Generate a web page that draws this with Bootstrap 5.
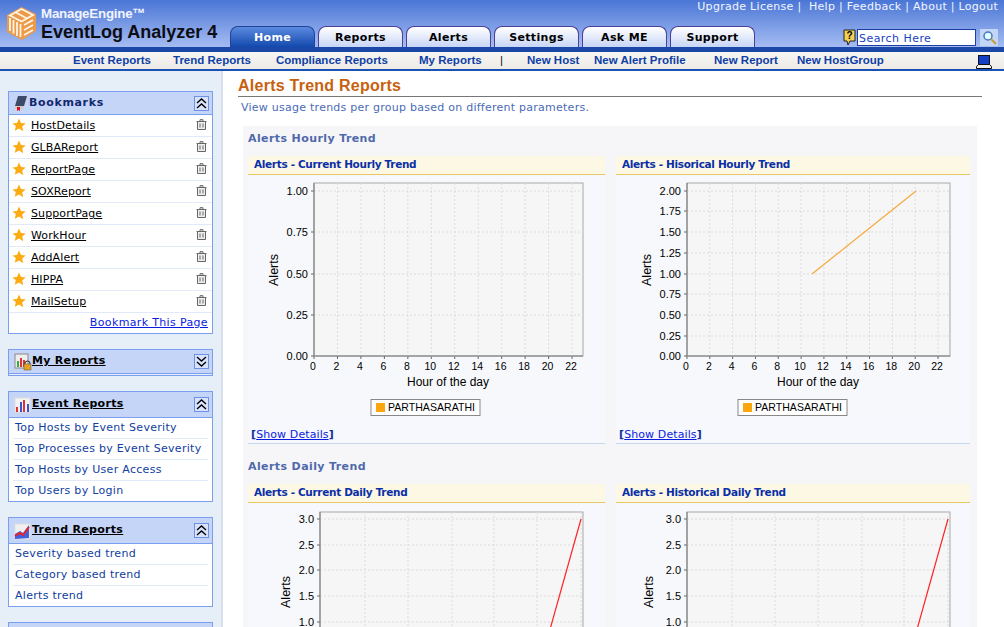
<!DOCTYPE html>
<html lang="en"><head><meta charset="utf-8"><title>EventLog Analyzer</title>
<link href="https://cdn.jsdelivr.net/npm/bootstrap@5.3.0/dist/css/bootstrap.min.css" rel="stylesheet">
<style>
html,body{height:627px;overflow:hidden;background:#fff}
body{font-family:"DejaVu Sans",Verdana,sans-serif;font-size:11px;color:#000}
.hdr{height:47px;background:linear-gradient(#4a76d6,#a5bcf2)}
.hdr-left{width:230px;flex:none;padding:6px 0 0 7px}
.brand-box{margin-left:5px;margin-top:-1px}
.brand1{font:bold 13.3px/17px "Liberation Sans",sans-serif;color:#f1f4ff;letter-spacing:-.2px}
.brand2{font:bold 18px/20px "Liberation Sans",sans-serif;color:#0d0d14;white-space:nowrap}
.hdr-right{flex:1;min-width:0}
.toplinks{color:#f2f5ff;letter-spacing:.29px;line-height:14px;white-space:pre;padding-right:6px;height:29px;margin-left:-70px}
.tabbar{gap:3px}
.tabx{width:85px;height:21px;border:1px solid #4b3f97;border-bottom:0;border-radius:8px 8px 0 0;background:linear-gradient(#fff,#c8d5f7);font-weight:bold;letter-spacing:.35px;text-align:center;line-height:22px;color:#000}
.tabx.on{background:linear-gradient(#5c8ae0,#1349ad);color:#fff;border-color:#24429a}
.srch{margin-left:88px;gap:1px}
.srch-in{width:119px;height:17px;margin-right:3px;background:#fff;border:1px solid #1a3fa0;color:#1a3fc0;letter-spacing:.45px;line-height:17px;padding-left:1px}
.hdr-bottom{height:5px;background:#1b47a6}
.subnav{height:19px;background:linear-gradient(#f7f6f3,#ecebe7);border-bottom:2px solid #1b51b5;padding-left:73px;font:bold 11.5px/17px "Liberation Sans",sans-serif;color:#0e3fa6}
.subnav>span{white-space:nowrap;flex:none}
.subnav>span:nth-child(1){width:100px}.subnav>span:nth-child(2){width:103px}.subnav>span:nth-child(3){width:143px}.subnav>span:nth-child(4){width:81px}
.subnav>span:nth-child(5){width:27px;color:#111;font-weight:normal}.subnav>span:nth-child(6){width:67px}.subnav>span:nth-child(7){width:120px}.subnav>span:nth-child(8){width:83px}.subnav>span:nth-child(9){width:179px}
.subnav svg{display:block;margin-top:3px}
.lay{height:557px;overflow:hidden}
.sidebar{width:223px;flex:none;background:#e6eef8;border-right:2px solid #d6dfeb;padding:20px 8px 0 8px}
.pan{border:1px solid #7b9ff0;background:#fff;margin-bottom:15px}
.pan-h{height:26px;background:#c5d5f8;border-bottom:1px solid #7b9ff0;padding:0 0 0 5px;font-weight:bold;letter-spacing:.3px;color:#000}
.pan-h.bmh{height:23px}
.pan-h.myh{height:24px}
.pan-tail{height:1px;background:#e8eefb}
.pan-h .ttl{flex:1;text-decoration:underline}
.pan-h .ttl.nolink{text-decoration:none;color:#14286e;letter-spacing:.65px;margin-left:1px}
.tog{width:15px;height:15px;margin-right:3px;border:1px solid #6d91e5;background:#d8e3fb}
.bk{height:22px;border-bottom:1px solid #e2e9f8;padding:0 0 2px 3px;letter-spacing:.1px}
.bk a{color:#000;margin-left:5px;flex:1;padding-top:4px;text-decoration:underline}
.bk svg.tr{margin-right:5px}
.bk-foot{height:20px;padding-right:4px;line-height:20px;letter-spacing:.35px}
.bk-foot a{color:#0a1ce0}
.lnk{height:21px;margin:0 4px;padding-left:2px;border-bottom:1px solid #e2e9f8;color:#10409e;letter-spacing:.3px;line-height:20px;white-space:nowrap}
.lnk:last-child{border-bottom:0;height:20px}
.mainp{flex:1;padding:5px 22px 0 15px;min-width:0}
.pg-t{font:bold 16px/20px "Liberation Sans",sans-serif;letter-spacing:.25px;color:#c8610d;border-bottom:1px solid #777;height:21px}
.pg-s{color:#4a6bb6;letter-spacing:.25px;margin:3px 0 0 3px;line-height:15px}
.sect{background:#f6f6f8;margin:11px 5px 0 5px;padding:0 5px;height:600px}
.sec-t{font-weight:bold;color:#5069ac;letter-spacing:.4px;height:30px;line-height:25px}
.sec2{padding-top:10px;height:40px}
.cols{gap:11px}
.colx{width:357px;flex:none;background:#f6f8fd}
.colx.nar{width:354px}
.colx .ch{height:19px;background:#fdf8e3;border-bottom:1px solid #e8c766;font:bold 10.5px/17px "DejaVu Sans",sans-serif;letter-spacing:-.33px;color:#0a2fa8;padding-left:6px}
.colx svg{display:block}
.sd{height:28px;border-bottom:1px solid #c6d7f0;padding:8px 0 0 3px;line-height:21px;letter-spacing:.1px;font-weight:bold;color:#10309c}
.sd a{font-weight:normal;color:#0a1ce0}
svg text{font-family:"Liberation Sans",sans-serif;fill:#000}
</style></head><body>
<div class="hdr d-flex">
<div class="hdr-left d-flex align-items-start">
<svg width="29" height="34" viewBox="0 0 29 34"><path d="M0 9 14.500 1 29 8v17l-14 9-15-8z" fill="#eb9a4a"/><g fill="none" stroke="#fff4e4" stroke-width="1.800"><path d="M14.500 3 26 9 14.500 15.500 3 9.500z"/><path d="M9 6.500 20 12.500M3 12v13M6.500 14v13.500M10 16v14M13.500 18v13M17 19l9-5M17 24l9-5M17 29l9-5"/></g></svg>
<div class="brand-box"><div class="brand1">ManageEngine™</div><div class="brand2">EventLog Analyzer 4</div></div>
</div>
<div class="tabbar d-flex align-self-end">
<div class="tabx on">Home</div><div class="tabx">Reports</div><div class="tabx">Alerts</div><div class="tabx">Settings</div><div class="tabx">Ask ME</div><div class="tabx">Support</div>
</div>
<div class="hdr-right">
<div class="toplinks text-end">Upgrade License |  Help | Feedback | About | Logout</div>
<div class="srch d-flex align-items-start">
<svg width="13" height="17" viewBox="0 0 13 17"><path d="M1 1h11v11H7l-2 4-1-4H1z" fill="#f3d252" stroke="#222"/><text x="6.500" y="10" font-size="10" font-weight="bold" text-anchor="middle">?</text></svg>
<div class="srch-in">Search Here</div>
<svg width="18" height="17" viewBox="0 0 18 17"><rect width="18" height="17" fill="#c4d6f5"/><circle cx="8" cy="7" r="4" fill="#dff" stroke="#4d74c0" stroke-width="1.500"/><path d="m11 10 5 5" stroke="#c79a3c" stroke-width="2"/></svg>
</div>
</div>
</div>
<div class="hdr-bottom"></div>
<div class="subnav d-flex">
<span>Event Reports</span><span>Trend Reports</span><span>Compliance Reports</span><span>My Reports</span><span>|</span><span>New Host</span><span>New Alert Profile</span><span>New Report</span><span>New HostGroup</span>
<span><svg width="16" height="14" viewBox="0 0 16 14"><rect x="2.500" y=".5" width="11" height="9" fill="#1440c8" stroke="#111"/><path d="M.5 13.500v-2l2-2h11l2 2v2z" fill="#eee" stroke="#111"/></svg></span>
</div>
<div class="lay d-flex">
<div class="sidebar">
<div class="pan" id="bm"></div>
<div class="pan"><div class="pan-h myh d-flex align-items-center"><svg width="18" height="18" viewBox="0 0 18 18"><rect x="1" y="1" width="13" height="14" fill="#eee" stroke="#888"/><path d="M6 14V5h2v9z" fill="#d33"/><path d="M3 14V8h2v6z" fill="#3a4"/><path d="M9 14V7h2v7z" fill="#d33"/><circle cx="13.500" cy="10.500" r="2.500" fill="none" stroke="#222"/><rect x="10" y="11" width="7" height="6" fill="#e5a21c" stroke="#555" stroke-width=".5"/></svg><span class="ttl">My Reports</span><span class="tog d-flex"><svg width="13" height="13" viewBox="0 0 13 13" fill="none" stroke="#000" stroke-width="1.400"><path d="m2 2 4.500 4L11 2M2 7l4.500 4L11 7"/></svg></span></div><div class="pan-tail"></div></div>
<div class="pan"><div class="pan-h d-flex align-items-center"><svg width="18" height="18" viewBox="0 0 18 18"><rect x="1" y="2" width="15" height="14" fill="#f3f3f3" stroke="#ddd"/><path d="M2 16v-5h2v5zM9 16V4h2v12z" fill="#d33"/><path d="M6 16V6h2v10zM13 16V8h2v8z" fill="#3a50d8"/></svg><span class="ttl">Event Reports</span><span class="tog d-flex"><svg width="13" height="13" viewBox="0 0 13 13" fill="none" stroke="#000" stroke-width="1.400"><path d="m2 6 4.500-4L11 6M2 11l4.500-4L11 11"/></svg></span></div>
<div class="lnk">Top Hosts by Event Severity</div><div class="lnk">Top Processes by Event Severity</div><div class="lnk">Top Hosts by User Access</div><div class="lnk">Top Users by Login</div></div>
<div class="pan"><div class="pan-h d-flex align-items-center"><svg width="18" height="18" viewBox="0 0 18 18"><rect x="1" y="2" width="15" height="15" fill="#f0f0f0" stroke="#ddd"/><path d="M1 17v-5l5-3 3 2 6-8v13z" fill="#4060e0"/><path d="m1 14 5-3 3 2 6-8" fill="none" stroke="#e22" stroke-width="2"/></svg><span class="ttl">Trend Reports</span><span class="tog d-flex"><svg width="13" height="13" viewBox="0 0 13 13" fill="none" stroke="#000" stroke-width="1.400"><path d="m2 6 4.500-4L11 6M2 11l4.500-4L11 11"/></svg></span></div>
<div class="lnk">Severity based trend</div><div class="lnk">Category based trend</div><div class="lnk">Alerts trend</div></div>
<div class="pan"><div class="pan-h"></div></div>
</div>
<div class="mainp">
<div class="pg-t">Alerts Trend Reports</div>
<div class="pg-s">View usage trends per group based on different parameters.</div>
<div class="sect">
<div class="sec-t">Alerts Hourly Trend</div>
<div class="cols d-flex"><div class="colx" id="c1"></div><div class="colx nar" id="c2"></div></div>
<div class="sec-t sec2">Alerts Daily Trend</div>
<div class="cols d-flex"><div class="colx" id="c3"></div><div class="colx nar" id="c4"></div></div>
</div>
</div>
</div>
<script>
var star='<svg width="14" height="14" viewBox="0 0 14 14"><path d="m7 .5 2 4.400 4.700.5-3.500 3.200 1 4.700L7 10.500 2.800 12.800l1-4.700L.3 5.400l4.700-.5z" fill="#fdab13"/></svg>';
var trash='<svg class="tr" width="11" height="11" viewBox="0 0 11 11" fill="#eee" stroke="#666"><path d="M.5 2.500h10M4 2.500V.7h3v1.800"/><path d="M1.500 2.500h8v8h-8zM4 4.500v4M7 4.500v4"/></svg>';
var h='<div class="pan-h bmh d-flex align-items-center"><svg width="14" height="16" viewBox="0 0 14 16"><path d="M4 1h9L10 11H1z" fill="#3c4a68"/><path d="M1 11h9l-1 3H1z" fill="#ccc"/><path d="M3 12h3v4l-1.500-1L3 16z" fill="#e01020"/></svg><span class="ttl nolink">Bookmarks</span><span class="tog d-flex"><svg width="13" height="13" viewBox="0 0 13 13" fill="none" stroke="#000" stroke-width="1.400"><path d="m2 6 4.500-4L11 6M2 11l4.500-4L11 11"/></svg></span></div>';
['HostDetails','GLBAReport','ReportPage','SOXReport','SupportPage','WorkHour','AddAlert','HIPPA','MailSetup'].forEach(function(n){h+='<div class="bk d-flex align-items-center">'+star+'<a href="#">'+n+'</a>'+trash+'</div>'});
h+='<div class="bk-foot text-end"><a href="#">Bookmark This Page</a></div>';
document.getElementById('bm').innerHTML=h;
function chart(o){
 var s='<svg width="'+o.w+'" height="'+o.h+'" viewBox="0 0 '+o.w+' '+o.h+'">';
 s+='<rect x="'+o.bx+'" y="5" width="'+o.bw+'" height="'+(o.h-5)+'" fill="#f7f8fb"/>';
 var L=o.L,R=o.R,T=o.T,B=T+o.ph,G='#dcdcdc';
 s+='<rect x="'+L+'" y="'+T+'" width="'+(R-L)+'" height="'+o.ph+'" fill="#f6f6f7" stroke="#a8a8a8"/>';
 o.xt.forEach(function(t){var x=L+t*o.xs;if(t){s+='<line x1="'+x+'" x2="'+x+'" y1="'+T+'" y2="'+B+'" stroke="'+G+'" stroke-dasharray="2 2"/>';}
  if(o.labels!==false){s+='<text x="'+(x-1)+'" y="'+(B+14)+'" font-size="10.500" text-anchor="middle">'+t+'</text><line x1="'+x+'" x2="'+x+'" y1="'+B+'" y2="'+(B+3)+'" stroke="#666"/>';}});
 o.yt.forEach(function(t){var y=t[1];s+='<line x1="'+L+'" x2="'+R+'" y1="'+y+'" y2="'+y+'" stroke="'+G+'" stroke-dasharray="2 2"/><line x1="'+(L-3)+'" x2="'+L+'" y1="'+y+'" y2="'+y+'" stroke="#666"/><text x="'+(L-6)+'" y="'+(y+4)+'" font-size="11" text-anchor="end">'+t[0]+'</text>';});
 s+='<line x1="'+L+'" x2="'+R+'" y1="'+B+'" y2="'+B+'" stroke="#777"/><line x1="'+L+'" x2="'+L+'" y1="'+T+'" y2="'+B+'" stroke="#777"/>';
 s+='<text transform="translate('+o.yl+','+(T+o.ylc)+') rotate(-90)" font-size="12.500" text-anchor="middle">Alerts</text>';
 if(o.xl){s+='<text x="'+o.xl+'" y="'+(B+30)+'" font-size="12" text-anchor="middle">Hour of the day</text>';
  s+='<rect x="'+o.lx+'" y="'+(B+43.5)+'" width="'+o.lw+'" height="16" fill="#fff" stroke="#888"/><rect x="'+(o.lx+5)+'" y="'+(B+47)+'" width="9" height="9" fill="#fda60f"/><text x="'+(o.lx+17)+'" y="'+(B+55)+'" font-size="10.500" letter-spacing=".05">PARTHASARATHI</text>';}
 if(o.line)s+='<polyline points="'+o.line+'" fill="none" stroke="'+o.lc+'" stroke-width="1.200"/>';
 return s+'</svg>';
}
var xt=[0,2,4,6,8,10,12,14,16,18,20,22];
function cell(id,title,svg,det){document.getElementById(id).innerHTML='<div class="ch">'+title+'</div>'+svg+(det?'<div class="sd">[<a href="#">Show Details</a>]</div>':'');}
cell('c1','Alerts - Current Hourly Trend',chart({w:357,h:241,T:8,bx:14,bw:328,L:66,R:335,ph:173,xs:11.73,xt:xt,yt:[['1.00',16],['0.75',57],['0.50',99],['0.25',140],['0.00',181]],yl:30,ylc:87,xl:200,lx:123,lw:109}),1);
cell('c2','Alerts - Hisorical Hourly Trend',chart({w:354,h:241,T:8,bx:11,bw:330,L:71,R:334,ph:173,xs:11.41,xt:xt,yt:[['2.00',16],['1.75',36],['1.50',57],['1.25',78],['1.00',99],['0.75',119],['0.50',140],['0.25',161],['0.00',181]],yl:35,ylc:87,xl:202,lx:122,lw:109,line:'196,99 300,16',lc:'#f7a83a'}),1);
cell('c3','Alerts - Current Daily Trend',chart({w:357,h:140,T:9,bx:15,bw:327,L:72,R:335,ph:400,xs:1,xt:[45,88,132,174,217,261],labels:false,yt:[['3.0',16],['2.5',42],['2.0',67],['1.5',93],['1.0',119]],yl:42,ylc:80,line:'333,16 301,130',lc:'#f22'}),0);
cell('c4','Alerts - Historical Daily Trend',chart({w:354,h:140,T:9,bx:11,bw:330,L:71,R:334,ph:400,xs:1,xt:[45,88,131,175,217,261],labels:false,yt:[['3.0',16],['2.5',42],['2.0',67],['1.5',93],['1.0',119]],yl:37,ylc:80,line:'332,16 300,130',lc:'#f22'}),0);
</script>
</body></html>
